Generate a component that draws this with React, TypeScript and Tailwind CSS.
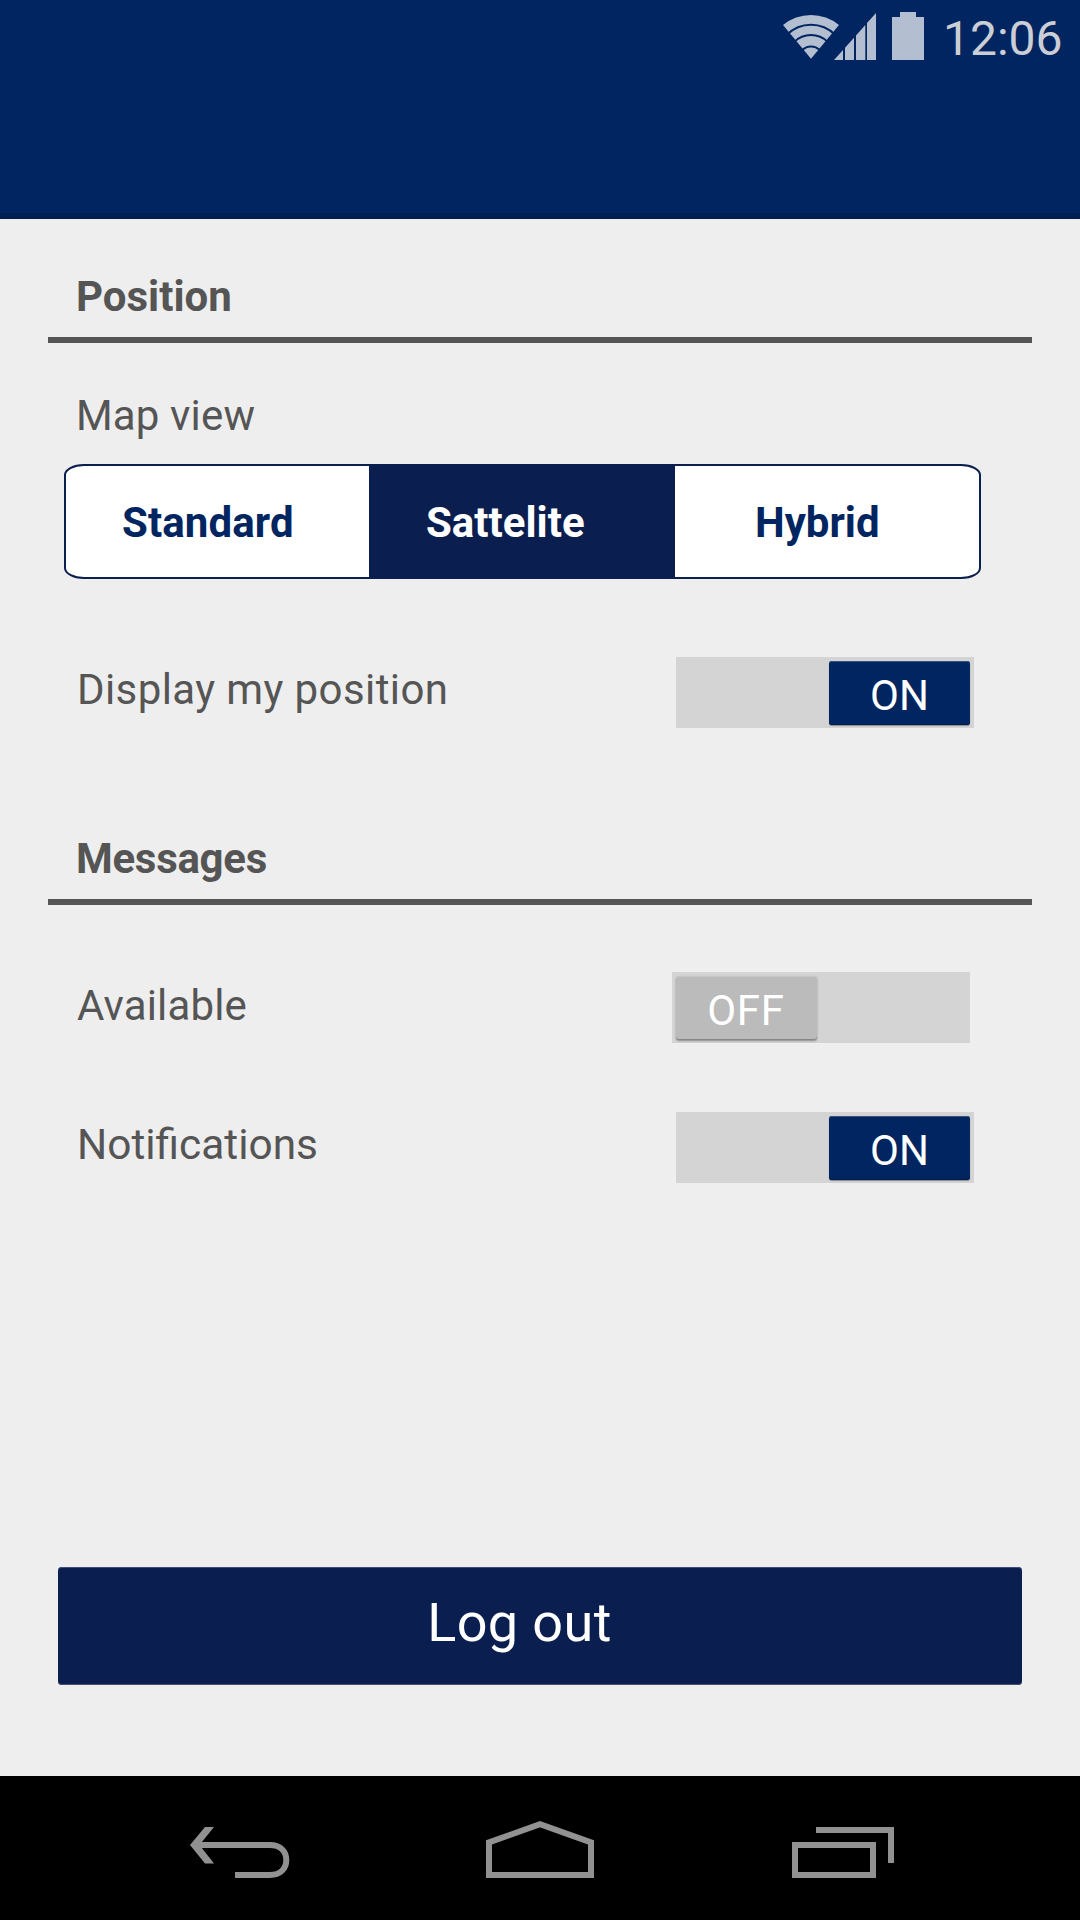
import React from "react";

function StatusIcons() {
  return (
    <svg className="block h-[50px] w-[141px]" viewBox="783 11 141 50" fill="#b3bed1">
      <path d="M811 58.8L783 25A44 44 0 0 1 839 25Z" />
      <g fill="none" stroke="#002560" strokeWidth="2">
        <circle cx="811" cy="58.8" r="34" />
        <circle cx="811" cy="58.8" r="23.7" />
        <circle cx="811" cy="58.8" r="12.4" />
      </g>
      <path d="M834 60L843 50V60ZM845 47.7L854 37.7V60H845ZM856 35.4L865.3 25V60H856ZM867 23L876 13V60H867Z" />
      <path d="M892 17H900V12H916V17H924V60H892Z" />
    </svg>
  );
}

function SectionTitle({ children, className }: { children: React.ReactNode; className: string }) {
  return (
    <h2 className={"ml-12 h-[70px] w-[984px] border-b-6 border-[#555555] pl-7 text-[42px] leading-[48px] font-bold " + className}>
      {children}
    </h2>
  );
}

function Toggle({ on }: { on: boolean }) {
  return (
    <div className={"flex h-[71px] w-[298px] shrink-0 bg-[#d4d4d4] px-1 pt-1 " + (on ? "justify-end" : "justify-start -ml-1")}>
      <button
        className={
          "h-16 w-[141px] rounded-[3px] text-[42px] leading-[70px] text-white " +
          (on
            ? "bg-[#002560] shadow-[inset_0_1px_0_#34517f,inset_0_-1px_0_#001c4b,0_1px_1px_rgba(0,0,0,0.35)]"
            : "bg-[#bbbbbb] pr-px tracking-[0.8px] shadow-[inset_0_1px_0_#c6c6c6,inset_0_-1px_0_#868686,0_1px_2px_rgba(0,0,0,0.35)]")
        }
      >
        {on ? "ON" : "OFF"}
      </button>
    </div>
  );
}

function SettingRow({ label, on, className, labelClass }: { label: string; on: boolean; className: string; labelClass: string }) {
  return (
    <div className={"flex h-[71px] " + className}>
      <span className={"w-[676px] shrink-0 pl-[77px] " + labelClass}>{label}</span>
      <Toggle on={on} />
    </div>
  );
}

export default function App() {
  return (
    <div className="flex h-[1920px] w-[1080px] flex-col overflow-hidden bg-[#eeeeee] font-['Roboto',sans-serif] text-[#555555]">
      <header className="h-[219px] shrink-0 border-b-6 border-[#001e50] bg-[#002560]">
        <div className="flex pt-[11px] pl-[783px]">
          <StatusIcons />
          <span className="ml-[19px] text-[48px] leading-[56px] text-[#ccced5]">12:06</span>
        </div>
      </header>

      <main className="flex grow flex-col">
        <SectionTitle className="mt-[54px]">Position</SectionTitle>
        <p className="mt-[48px] h-[50px] pl-[76px] text-[42px] leading-[50px] tracking-[0.15px]">Map view</p>
        <div className="mt-[23px] ml-16 flex h-[115px] w-[917px] overflow-hidden rounded-[20px/11px] border-2 border-[#0a1e4f] bg-white text-[42px] leading-[113px] font-bold text-[#002560]">
          <div className="w-[303px] pl-[56px] tracking-[0.1px]">Standard</div>
          <div className="w-[306px] bg-[#0a1e4f] pl-[57px] text-white">Sattelite</div>
          <div className="grow pl-[80px]">Hybrid</div>
        </div>

        <SettingRow label="Display my position" on className="mt-[78px]" labelClass="text-[42px] leading-[65px] tracking-[0.4px]" />

        <SectionTitle className="mt-[107px] tracking-[-0.3px]">Messages</SectionTitle>
        <SettingRow label="Available" on={false} className="mt-[67px]" labelClass="text-[42px] leading-[67px] tracking-[0.15px]" />
        <SettingRow label="Notifications" on className="mt-[69px]" labelClass="text-[42.4px] leading-[65px]" />

        <button className="mt-[384px] ml-[58px] h-[118px] w-[964px] rounded-[4px] bg-[#0a1e4f] pr-[41px] pb-1.5 text-[54px] leading-[64px] tracking-[0.4px] text-white shadow-[inset_0_1px_0_#3f4d78,inset_0_-1px_0_#48506a]">
          Log out
        </button>
      </main>

      <nav className="flex h-36 shrink-0 bg-black pt-[44px] pl-[190px]">
        <svg className="h-[60px] w-[100px]" viewBox="190 1820 100 60" fill="none" stroke="#919191" strokeWidth="6">
          <path d="M198 1845H270C280 1845 286.3 1851 286.3 1860S280 1875 270 1875H235" />
          <path d="M205 1827H214L199.500 1845L214 1863.500H205L190 1845Z" fill="#919191" stroke="none" />
        </svg>
        <svg className="ml-[196px] h-[60px] w-[108px]" viewBox="486 1820 108 60" fill="none" stroke="#919191" strokeWidth="6">
          <path d="M489 1875V1842.400L540 1824.200L591 1842.400V1875Z" />
        </svg>
        <svg className="ml-[198px] h-[60px] w-[102px]" viewBox="792 1820 102 60" fill="none" stroke="#919191" strokeWidth="6">
          <path d="M795 1845H873V1875H795ZM816 1830H891V1863" />
        </svg>
      </nav>
    </div>
  );
}
